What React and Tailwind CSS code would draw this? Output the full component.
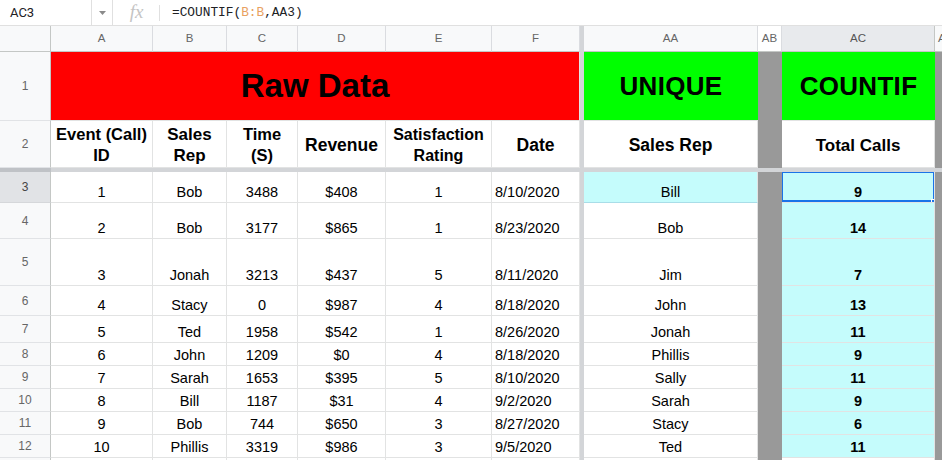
import React from "react";

const raw = [
  ["1", "Bob", "3488", "$408", "1", "8/10/2020"],
  ["2", "Bob", "3177", "$865", "1", "8/23/2020"],
  ["3", "Jonah", "3213", "$437", "5", "8/11/2020"],
  ["4", "Stacy", "0", "$987", "4", "8/18/2020"],
  ["5", "Ted", "1958", "$542", "1", "8/26/2020"],
  ["6", "John", "1209", "$0", "4", "8/18/2020"],
  ["7", "Sarah", "1653", "$395", "5", "8/10/2020"],
  ["8", "Bill", "1187", "$31", "4", "9/2/2020"],
  ["9", "Bob", "744", "$650", "3", "8/27/2020"],
  ["10", "Phillis", "3319", "$986", "3", "9/5/2020"],
  ["", "", "", "", "", ""],
];

const uniq = [
  ["Bill", "9"],
  ["Bob", "14"],
  ["Jim", "7"],
  ["John", "13"],
  ["Jonah", "11"],
  ["Phillis", "9"],
  ["Sally", "11"],
  ["Sarah", "9"],
  ["Stacy", "6"],
  ["Ted", "11"],
  ["", ""],
];

const rowHead =
  "flex items-center justify-center text-[12px] text-[#666] bg-[#f8f9fa] border-r border-r-[#c4c7c5] border-b border-b-[#e1e3e6]";
const colHead =
  "flex items-center justify-center text-[11.5px] text-[#666] bg-[#f8f9fa] border-r border-r-[#dadce0] border-b border-b-[#c4c7c5]";
const cell =
  "flex items-end border-r border-b border-[#e2e3e3] text-[14.5px] leading-[17px] pb-[1px] overflow-hidden whitespace-nowrap";
const divider = "bg-[#d3d5d8]";
const grayCell = "bg-[#999999]";
const headCell =
  "flex items-center justify-center text-center border-r border-b border-[#e2e3e3] font-bold text-[16.5px] leading-[21px] pt-[2px] bg-white";

function FormulaBar() {
  return (
    <div className="h-[26px] flex items-stretch border-b border-[#e0e0e0] bg-white">
      <div className="w-[92px] border-r border-[#e0e0e0] flex items-center pl-[10px] text-[13px] text-[#202124] font-['Roboto','Liberation_Sans',sans-serif]">
        AC3
      </div>
      <div className="w-[21px] border-r border-[#e0e0e0] flex items-center justify-center">
        <svg width="7" height="4" viewBox="0 0 7 4">
          <path d="M0 0 L7 0 L3.5 4 Z" fill="#8a8a8a" />
        </svg>
      </div>
      <div className="w-[47px] flex items-center justify-center relative">
        <span className="font-['Liberation_Serif',serif] italic text-[19px] text-[#c4c4c4] leading-none -mt-[2px]">
          fx
        </span>
        <div className="absolute right-0 top-[5px] h-[16px] w-px bg-[#e0e0e0]" />
      </div>
      <div className="flex items-center pl-[12px] font-['Liberation_Mono',monospace] text-[12.8px] text-[#202124]">
        <span>=COUNTIF(</span>
        <span className="text-[#e8a160]">B:B</span>
        <span>,AA3)</span>
      </div>
    </div>
  );
}

export default function App() {
  return (
    <div className="w-[942px] h-[460px] overflow-hidden bg-white font-['Liberation_Sans',Arial,sans-serif] text-black">
      <FormulaBar />
      <div className="grid grid-cols-[51px_102px_74px_71px_88px_106px_88px_4px_174px_24px_153px_1fr] grid-rows-[26px_69px_47px_4px_31px_36px_47px_30px_27px_23px_23px_23px_23px_23px_23px_23px]">
        {/* column header row */}
        <div className="bg-[#f8f9fa] border-r border-b border-[#c4c7c5]" />
        {["A", "B", "C", "D", "E", "F"].map((l) => (
          <div key={l} className={colHead}>
            {l}
          </div>
        ))}
        <div className={divider} />
        <div className={colHead}>AA</div>
        <div className="flex items-center justify-center text-[11.5px] text-[#666] bg-white border-r border-r-[#dadce0] border-b border-b-[#c4c7c5]">
          AB
        </div>
        <div className="flex items-center justify-center text-[11.5px] text-[#555] bg-[#e8eaed] border-r border-r-[#c4c7c5] border-b border-b-[#c4c7c5]">
          AC
        </div>
        <div className="flex items-center pl-[3px] text-[11.5px] text-[#666] bg-[#f8f9fa] border-b border-b-[#c4c7c5] overflow-hidden">
          A
        </div>

        {/* row 1 */}
        <div className={rowHead}>1</div>
        <div className="col-span-6 bg-[#ff0000] flex items-center justify-center font-bold text-[33px] border-r border-b border-[#e2e3e3]">
          Raw Data
        </div>
        <div className={divider} />
        <div className="bg-[#00ff00] flex items-center justify-center font-bold text-[26px] tracking-[0.3px] border-b border-[#e2e3e3]">
          UNIQUE
        </div>
        <div className={grayCell} />
        <div className="bg-[#00ff00] flex items-center justify-center font-bold text-[26px] tracking-[0.3px] border-b border-[#e2e3e3]">
          COUNTIF
        </div>
        <div className={grayCell} />

        {/* row 2 */}
        <div className={rowHead}>2</div>
        <div className={headCell}>
          Event (Call)
          <br />
          ID
        </div>
        <div className={`${headCell} text-[17px]`}>
          Sales
          <br />
          Rep
        </div>
        <div className={headCell}>
          Time
          <br />
          (S)
        </div>
        <div className={`${headCell} text-[17.5px]`}>Revenue</div>
        <div className={`${headCell} text-[16px]`}>
          Satisfaction
          <br />
          Rating
        </div>
        <div className={`${headCell} text-[17.5px]`}>Date</div>
        <div className={divider} />
        <div className={`${headCell} text-[17.5px]`}>Sales Rep</div>
        <div className={grayCell} />
        <div className={`${headCell} text-[17px]`}>Total Calls</div>
        <div className={grayCell} />

        {/* frozen divider row */}
        <div className="col-span-12 flex">
          <div className="w-[51px] bg-[#bfc2c6]" />
          <div className="flex-1 bg-[#d3d5d8]" />
        </div>

        {/* data rows */}
        {raw.map((r, i) => {
          const [name, count] = uniq[i];
          const first = i === 0;
          const last = i === raw.length - 1;
          return (
            <React.Fragment key={i}>
              <div
                className={
                  first
                    ? "flex items-center justify-center text-[12px] text-[#444] bg-[#e1e3e6] border-r border-r-[#c4c7c5] border-b border-b-[#d5d7da]"
                    : rowHead
                }
              >
                {last ? "13" : i + 3}
              </div>
              {r.slice(0, 5).map((v, j) => (
                <div key={j} className={`${cell} justify-center`}>
                  {v}
                </div>
              ))}
              <div className={`${cell} justify-start pl-[3px]`}>{r[5]}</div>
              <div className={divider} />
              <div
                className={`${cell} justify-center ${
                  first ? "bg-[#c5fcfc] border-b-[#a9dde8]" : "bg-white"
                }`}
              >
                {name}
              </div>
              <div className={grayCell} />
              <div
                className={`${cell} justify-center font-bold relative ${
                  last ? "bg-white" : "bg-[#c5fcfc] border-[#d3eaea]"
                }`}
              >
                {count}
                {first && (
                  <>
                    <div className="absolute -left-px -top-px -right-px bottom-0 border-2 border-[#1a73e8]" />
                    <div className="absolute -right-[4px] -bottom-[4px] w-[7px] h-[7px] bg-[#1a73e8] border border-white" />
                  </>
                )}
              </div>
              <div className={grayCell} />
            </React.Fragment>
          );
        })}
      </div>
    </div>
  );
}
